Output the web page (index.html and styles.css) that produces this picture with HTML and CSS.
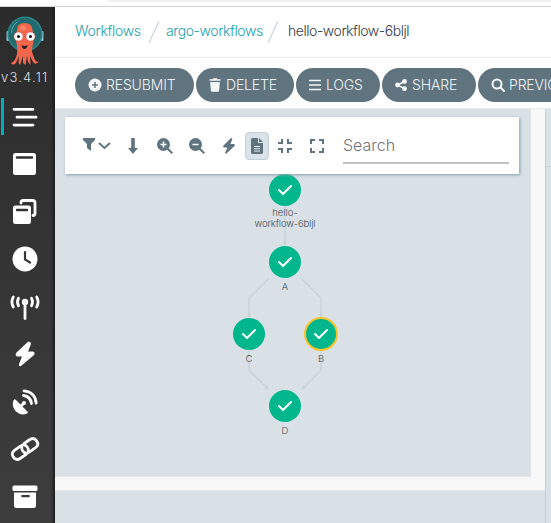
FILE: index.html
```html
<!DOCTYPE html>
<html lang="en">
<head>
<meta charset="utf-8">
<title>Workflow</title>
<link rel="stylesheet" href="styles.css">
</head>
<body>
<div class="chrome"><div class="address"></div></div>
<div class="app">
  <nav class="sidebar">
    <svg class="logo" width="38" height="51" viewBox="0 0 38 51">
      <rect x="0.5" y="15" width="3" height="10" rx="1" fill="#8dbfd3"/><rect x="34.5" y="15" width="3" height="10" rx="1" fill="#8dbfd3"/>
      <circle cx="19" cy="18" r="16.8" fill="#206a70" stroke="#2b8584" stroke-width="1.5"/>
      <path d="M5.500 17Q6 10 11 6" fill="none" stroke="#65aaa8"/>
      <path d="M11 14Q11 7 18.500 7Q26 7 26.500 14L28 23Q26 31 26 36L29 44Q31 47 33 45Q30 50 27 46L24 40L24.500 49L22 46L21 40L19.500 49L17 47L17 40L14 49L12.500 47L13 40L10 47Q7 50 5 47Q9 46 11 38Q12 30 9 22Z" fill="#f2674b"/>
      <ellipse cx="17" cy="12" rx="3" ry="2.500" fill="#fb846a"/>
      <circle cx="12.500" cy="20.500" r="4.600" fill="#fff" stroke="#d74d3d" stroke-width=".6"/><circle cx="24.500" cy="20.500" r="4.600" fill="#fff" stroke="#d74d3d" stroke-width=".6"/>
      <circle cx="12.500" cy="20.500" r="1.500" fill="#111"/><circle cx="24.500" cy="20.500" r="1.500" fill="#111"/>
      <path d="M15.500 29Q18.500 31 21.500 29Q21 33 18.500 33Q16 33 15.500 29Z" fill="#292025"/>
    </svg>
    <div class="version">v3.4.11</div>
    <div class="nav-item active"><svg width="30" height="28" viewBox="0 0 30 28"><path d="M4 6.300H23M7 14.200H26M4 22.100H23" class="line3"/></svg></div>
    <div class="nav-item"><svg width="30" height="28" viewBox="0 0 30 28"><path fill-rule="evenodd" d="M5.500 3H23.500Q26 3 26 5.500V22.500Q26 25 23.500 25H5.500Q3 25 3 22.500V5.500Q3 3 5.500 3ZM7 6.300A1.100 1.100 0 0 0 7 8.800H22A1.100 1.100 0 0 0 22 6.300Z"/></svg></div>
    <div class="nav-item"><svg width="30" height="28" viewBox="0 0 30 28"><path class="line3" d="M11 5V4.500Q11 2.500 13 2.500H22.500Q25 2.500 25 5V15Q25 17.500 23 17.500"/><path fill-rule="evenodd" d="M5.500 7.500H18.500Q21 7.500 21 10V23.500Q21 26 18.500 26H5.500Q3 26 3 23.500V10Q3 7.500 5.500 7.500ZM7 10.800A1.100 1.100 0 0 0 7 13.200H17A1.100 1.100 0 0 0 17 10.800Z"/></svg></div>
    <div class="nav-item"><svg width="30" height="28" viewBox="0 0 30 28"><circle cx="15" cy="14" r="12.500"/><path d="M15 7V14.500L20 17.500" fill="none" stroke="#353535" stroke-width="2.200" stroke-linecap="round"/></svg></div>
    <div class="nav-item"><svg width="30" height="28" viewBox="0 0 30 28"><circle cx="15" cy="9" r="3.200"/><path d="M15 10V25.500" class="line3"/><path d="M3.300 4Q.5 9 3.300 14M8.500 5.200Q6.500 9 8.500 12.800M26.700 4Q29.500 9 26.700 14M21.500 5.200Q23.500 9 21.500 12.800" class="line3"/></svg></div>
    <div class="nav-item"><svg width="30" height="28" viewBox="0 0 30 28"><path d="M18 1.800Q21 1 21 4L18 11.500H23Q26 13 23.500 15.500L11 26Q8.500 27 9 24L12 16.500H7Q4.500 15 6.500 12.500Z"/></svg></div>
    <div class="nav-item"><svg width="30" height="28" viewBox="0 0 30 28"><path d="M3.500 12.500Q4.500 10.500 6 12L10.500 16.500L12 15Q12 13 14 13Q16 13 16 15Q16 17 14 17L12.500 18.500L17.500 23.500Q18.500 25 17 25.500Q11 28 6 23.500Q1 18 3.500 12.500Z"/><path d="M13.500 7.500Q20.500 8.500 21.500 15.500M14 2.800Q25 4 26.200 15" class="line3"/></svg></div>
    <div class="nav-item"><svg width="30" height="28" viewBox="0 0 30 28"><g transform="rotate(-35 15 14)" class="line3"><path d="M13 19H6Q.8 19 .8 14T6 9H13Q18 9 18 14Q18 16 16.500 17.500"/><path d="M17 9H24Q29.200 9 29.200 14T24 19H17Q12 19 12 14Q12 12 13.500 10.500"/></g></svg></div>
    <div class="nav-item"><svg width="30" height="28" viewBox="0 0 30 28"><rect x="2.500" y="2.500" width="25" height="5.500" rx="1.500"/><path fill-rule="evenodd" d="M4 9.500H26V22.500Q26 25 23.500 25H6.500Q4 25 4 22.500ZM12 12Q10 13 12 14.200H19Q21 13 19 12Z"/></svg></div>
  </nav>
  <main class="main">
    <header class="crumbs">
      <a class="c1">Workflows</a>
      <svg width="12" height="24" viewBox="0 0 12 24"><path d="M1 23L11 1"/></svg>
      <a class="c2">argo-workflows</a>
      <svg width="12" height="24" viewBox="0 0 12 24"><path d="M1 23L11 1"/></svg>
      <span class="c3">hello-workflow-6bljl</span>
    </header>
    <div class="actions">
      <div class="btn b1"><svg width="14" height="14" viewBox="0 0 14 14"><circle cx="7" cy="7" r="6.500"/><path d="M7 4V10M4 7H10" stroke="#60747f" stroke-width="1.500"/></svg><span>RESUBMIT</span></div>
      <div class="btn b2"><svg width="12" height="14" viewBox="0 0 12 14"><path d="M.5 1.300H3.500L4.500 .3H7.500L8.500 1.300H11.500V2.800H.5ZM1.200 4H10.800L10.200 12.500Q10 13.700 9 13.700H3Q2 13.700 1.800 12.500Z"/></svg><span>DELETE</span></div>
      <div class="btn b3"><svg width="12" height="14" viewBox="0 0 12 14"><path d="M0 2.500H12M0 7H12M0 11.500H12" stroke="#f4f7f8" stroke-width="1.700"/></svg><span>LOGS</span></div>
      <div class="btn b4"><svg width="12" height="14" viewBox="0 0 12 14"><path d="M9.500 3.500L2.500 7L9.500 10.700" fill="none" stroke="#f4f7f8" stroke-width="1.500"/><circle cx="2.500" cy="7" r="2.400"/><circle cx="9.500" cy="3.500" r="2.400"/><circle cx="9.500" cy="10.700" r="2.400"/></svg><span>SHARE</span></div>
      <div class="btn b5"><svg width="14" height="14" viewBox="0 0 14 14"><path d="M9.500 9.500L13 13" class="lens"/><circle cx="6" cy="6" r="4.500" class="lens"/></svg><span>PREVIOUS RUNS</span></div>
    </div>
    <div class="content">
      <div class="left">
        <div class="frame"><section class="graph">
          <svg class="dag" width="475" height="367" viewBox="55 109 475 367">
            <g class="edges"><path d="M285 206V243M269 278L249 298V316M301 278L321 298V316M249 350V370L267 388M321 350V370L303 388"/></g>
            <g fill="#c7d2d9"><path d="M283 242H287L285 246ZM247 314H251L249 318ZM319 314H323L321 318ZM269 390L264 388L267 385ZM301 390L306 388L303 385Z"/></g>
            <g fill="#00b78d"><circle cx="285" cy="190" r="16"/><circle cx="285" cy="262" r="16"/><circle cx="249" cy="334" r="16"/><circle cx="321" cy="334" r="16" stroke="#fbc42b" stroke-width="2"/><circle cx="285" cy="406" r="16"/></g>
            <path class="checks" d="M279 190L283 194L291 186M279 262L283 266L291 258M243 334L247 338L255 330M315 334L319 338L327 330M279 406L283 410L291 402"/>
            <g class="labels"><text x="285" y="216">hello-</text><text x="285" y="227" textLength="61">workflow-6bljl</text><text x="285" y="290">A</text><text x="249" y="362">C</text><text x="321" y="362">B</text><text x="285" y="434">D</text></g>
          </svg>
          <div class="toolbar">
            <svg width="28" height="16" viewBox="0 0 28 16"><path d="M0 0H12V2L8 6V13L4 10V6L0 2Z"/><path d="M16 5L21.500 10L27 5" class="stroke"/></svg>
            <svg width="10" height="16" viewBox="0 0 10 16"><path d="M3.200 0H6.800V10H10L5 16L0 10H3.200Z"/></svg>
            <svg width="16" height="16" viewBox="0 0 16 16"><path d="M10 10L15.200 15.200" class="stroke"/><circle cx="6.500" cy="6.500" r="6.500"/><path d="M6.500 3.500V9.500M3.500 6.500H9.500" stroke="#fff" stroke-width="1.500"/></svg>
            <svg width="16" height="16" viewBox="0 0 16 16"><path d="M10 10L15.200 15.200" class="stroke"/><circle cx="6.500" cy="6.500" r="6.500"/><path d="M3.500 6.500H9.500" stroke="#fff" stroke-width="1.500"/></svg>
            <svg width="12" height="16" viewBox="0 0 12 16"><path d="M8 0Q10 0 9 2L7.500 6H11Q12.500 7 11.500 8L3.500 15.500Q1.500 16.500 2.500 14L4.500 9.500H1Q-.5 9 .5 7.500Z"/></svg>
            <div class="selected"><svg width="12" height="16" viewBox="0 0 12 16"><path d="M1.500 0H7V5H12V14.500Q12 16 10.500 16H1.500Q0 16 0 14.500V1.500Q0 0 1.500 0ZM8 0L12 4H8Z"/><path d="M3 8.500H9M3 10.700H9M3 13H9" stroke="#e6edf1"/></svg></div>
            <svg width="14" height="14" viewBox="0 0 14 14"><path class="stroke" d="M0 4H4V0M10 0V4H14M0 10H4V14M14 10H10V14"/></svg>
            <svg width="14" height="14" viewBox="0 0 14 14"><path class="stroke" d="M1 5V1H5M9 1H13V5M13 9V13H9M5 13H1V9"/></svg>
            <div class="search">Search</div>
          </div>
        </section></div>
        <div class="below"></div>
      </div>
      <aside class="side"><div class="side-top"></div></aside>
    </div>
  </main>
</div>
</body>
</html>
```
FILE: styles.css
```css
* { box-sizing: border-box; }
body { margin: 0; width: 551px; height: 523px; overflow: hidden; background: #fff; font-family: Inter, "Liberation Sans", sans-serif; font-weight: 300; }
svg { display: block; flex: none; }
.chrome { height: 7px; border-bottom: 1px solid #d2d5d5; padding-left: 108px; }
.address { height: 2px; background: #f0f0f0; border-bottom-left-radius: 6px; }
.app { display: flex; height: 516px; }
.sidebar { width: 55px; flex: none; display: flex; flex-direction: column; background: linear-gradient(#2b2b2b, #343434 45%, #3d3d3d); box-shadow: inset -3px 0 2px -1px #211e1d; }
.logo { margin: 9px 0 0 6px; }
.version { height: 20px; line-height: 20px; color: #dedede; font-size: 13px; letter-spacing: 1.2px; padding-left: 1px; white-space: nowrap; }
.nav-item { height: 37px; flex: none; margin-bottom: 10.5px; padding-left: 10px; display: flex; align-items: center; }
.version + .nav-item { margin-top: 11px; }
.active { border-left: 3px solid #00adbd; padding-left: 6px; margin-left: 1px; }
.nav-item svg { fill: #fff; overflow: visible; }
.nav-item .line3 { fill: none; stroke: #fff; stroke-width: 2.8; stroke-linecap: round; stroke-linejoin: round; }
.main { flex: 1; min-width: 0; display: flex; flex-direction: column; }
.crumbs { height: 51px; flex: none; border-bottom: 1px solid #e9ebec; display: flex; align-items: center; padding: 0 0 2px 20px; font-size: 14px; color: #363c4a; white-space: nowrap; font-weight: 350; }
.crumbs a, .crumbs span { line-height: 18px; padding-bottom: 1px; }
.crumbs a { color: #1a9fae; }
.crumbs svg { margin: 1px 0 0; fill: none; stroke: #ccd6dc; stroke-width: 1.3; }
.c1 { width: 73px; letter-spacing: -.3px; }
.c2 { width: 97px; margin-left: 6px; letter-spacing: -.4px; }
.c2 + svg { margin-left: 4px !important; }
.c3 { margin-left: 9px; letter-spacing: -.45px; }
.actions { height: 51px; flex: none; border-bottom: 1px solid #e8ebec; padding: 10px 0 0 20px; display: flex; gap: 2px; overflow: hidden; }
.btn { height: 34px; border-radius: 17px; background: #60747f; color: #eef3f5; display: flex; flex: none; align-items: center; padding: 0 0 2px 13px; font-size: 14px; letter-spacing: -.15px; white-space: nowrap; }
.btn svg { fill: #f4f7f8; position: relative; top: 1px; }
.btn span { margin-left: 4px; }
.lens { fill: none; stroke: #f4f7f8; stroke-width: 2; stroke-linecap: round; }
.b1 { width: 119px; }
.b2 { width: 98px; }
.b2 span { margin-left: 5px; }
.b3 { width: 84px; }
.b3 span { margin-left: 5px; }
.b4 { width: 94px; }
.b4 span { margin-left: 5px; }
.b5 { width: 150px; }
.content { flex: 1; display: flex; min-height: 0; }
.left { width: 490px; flex: none; display: flex; flex-direction: column; }
.frame { height: 382px; flex: none; background: #f8f8f8; border-bottom: 1px solid #e5e7e8; }
.graph { position: relative; width: 476px; height: 368px; background: #d9e1e7; border-right: 1px solid #e2e4e5; border-bottom: 1px solid #e2e4e5; }
.below { flex: 1; background: #d8e1e6; }
.dag { position: absolute; left: 0; top: 0; }
.edges { fill: none; stroke: #c7d2d9; stroke-width: 1.3; }
.checks { fill: none; stroke: #fff; stroke-width: 2; stroke-linecap: round; stroke-linejoin: round; }
.labels { font-size: 9.5px; font-weight: 350; fill: #454e56; text-anchor: middle; }
.toolbar { position: absolute; left: 10px; top: 8px; width: 454px; height: 57px; background: #fff; box-shadow: 1px 1px 3px #849dab; display: flex; align-items: center; padding-left: 18px; }
.toolbar svg { fill: #60747f; }
.toolbar .stroke { fill: none; stroke: #60747f; stroke-width: 2; }
.toolbar > svg + svg { margin-left: 16px; }
.toolbar > svg:nth-child(2) { margin-left: 17px; }
.toolbar > svg:nth-child(3) { margin-left: 19px; }
.toolbar > svg:nth-child(5) { margin-left: 18px; }
.selected { width: 24px; height: 28px; margin: 0 9px 0 10px; border: 1px solid #c1cfd8; border-radius: 4px; background: #d9e2e9; display: flex; align-items: center; justify-content: center; }
.toolbar > svg:nth-child(8) { margin-left: 18px; }
.search { width: 166px; height: 35px; margin: 1px 0 0 19px; border-bottom: 2px solid #c2c2c2; color: #737373; font-size: 16px; line-height: 33px; }
.side { flex: 1; border-left: 1px solid #c3d0d8; background: #d9e2e7; }
.side-top { height: 58px; border-bottom: 1px solid #c3d0d8; }
```
